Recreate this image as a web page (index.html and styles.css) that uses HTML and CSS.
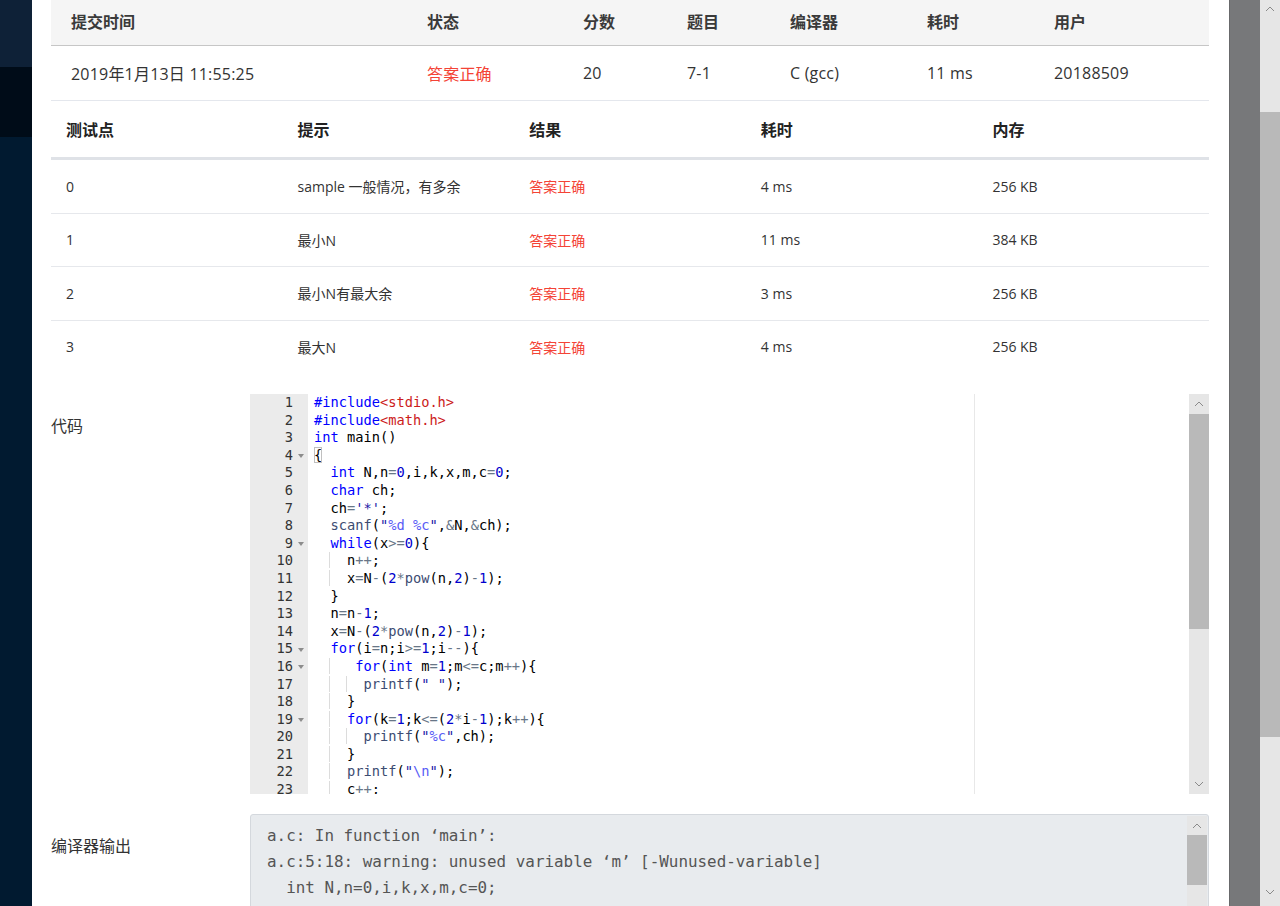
FILE: index.html
```html
<!DOCTYPE html>
<html lang="zh-CN">
<head>
<meta charset="utf-8">
<title>提交详情</title>
<link rel="stylesheet" href="styles.css">
</head>
<body>
<div class="backdrop-left"></div>
<main class="modal">
  <div class="sub-table">
    <div class="sub-head">
      <div>提交时间</div><div>状态</div><div>分数</div><div>题目</div><div>编译器</div><div>耗时</div><div>用户</div>
    </div>
    <div class="sub-row">
      <div>2019年1月13日 11:55:25</div><div class="ok">答案正确</div><div>20</div><div>7-1</div><div>C (gcc)</div><div>11 ms</div><div>20188509</div>
    </div>
  </div>

  <div class="case-table">
    <div class="case-head">
      <div>测试点</div><div>提示</div><div>结果</div><div>耗时</div><div>内存</div>
    </div>
    <div class="case-row"><div>0</div><div>sample 一般情况，有多余</div><div class="ok">答案正确</div><div>4 ms</div><div>256 KB</div></div>
    <div class="case-row"><div>1</div><div>最小N</div><div class="ok">答案正确</div><div>11 ms</div><div>384 KB</div></div>
    <div class="case-row"><div>2</div><div>最小N有最大余</div><div class="ok">答案正确</div><div>3 ms</div><div>256 KB</div></div>
    <div class="case-row last"><div>3</div><div>最大N</div><div class="ok">答案正确</div><div>4 ms</div><div>256 KB</div></div>
  </div>

  <section class="section">
    <div class="section-label">代码</div>
    <div class="code-box">
      <div class="gutter">
        <div class="gl"><span class="ln">1</span><span class="fold"></span></div>
        <div class="gl"><span class="ln">2</span><span class="fold"></span></div>
        <div class="gl"><span class="ln">3</span><span class="fold"></span></div>
        <div class="gl"><span class="ln">4</span><span class="fold open"></span></div>
        <div class="gl"><span class="ln">5</span><span class="fold"></span></div>
        <div class="gl"><span class="ln">6</span><span class="fold"></span></div>
        <div class="gl"><span class="ln">7</span><span class="fold"></span></div>
        <div class="gl"><span class="ln">8</span><span class="fold"></span></div>
        <div class="gl"><span class="ln">9</span><span class="fold open"></span></div>
        <div class="gl"><span class="ln">10</span><span class="fold"></span></div>
        <div class="gl"><span class="ln">11</span><span class="fold"></span></div>
        <div class="gl"><span class="ln">12</span><span class="fold"></span></div>
        <div class="gl"><span class="ln">13</span><span class="fold"></span></div>
        <div class="gl"><span class="ln">14</span><span class="fold"></span></div>
        <div class="gl"><span class="ln">15</span><span class="fold open"></span></div>
        <div class="gl"><span class="ln">16</span><span class="fold open"></span></div>
        <div class="gl"><span class="ln">17</span><span class="fold"></span></div>
        <div class="gl"><span class="ln">18</span><span class="fold"></span></div>
        <div class="gl"><span class="ln">19</span><span class="fold open"></span></div>
        <div class="gl"><span class="ln">20</span><span class="fold"></span></div>
        <div class="gl"><span class="ln">21</span><span class="fold"></span></div>
        <div class="gl"><span class="ln">22</span><span class="fold"></span></div>
        <div class="gl"><span class="ln">23</span><span class="fold"></span></div>
      </div>
      <div class="code">
        <div class="print-margin"></div>
<div class="cl"><span class="k">#include</span><span class="h">&lt;stdio.h&gt;</span></div>
<div class="cl"><span class="k">#include</span><span class="h">&lt;math.h&gt;</span></div>
<div class="cl"><span class="k">int</span> main()</div>
<div class="cl"><span class="br">{</span></div>
<div class="cl">  <span class="k">int</span> N,n<span class="o">=</span><span class="n">0</span>,i,k,x,m,c<span class="o">=</span><span class="n">0</span>;</div>
<div class="cl">  <span class="k">char</span> ch;</div>
<div class="cl">  ch<span class="o">=</span><span class="c">'*'</span>;</div>
<div class="cl">  <span class="f">scanf</span>(<span class="s">"<span class="e">%d</span> <span class="e">%c</span>"</span>,<span class="o">&amp;</span>N,<span class="o">&amp;</span>ch);</div>
<div class="cl">  <span class="k">while</span>(x<span class="o">&gt;=</span><span class="n">0</span>){</div>
<div class="cl"><span class="ig">  </span>  n<span class="o">++</span>;</div>
<div class="cl"><span class="ig">  </span>  x<span class="o">=</span>N<span class="o">-</span>(<span class="n">2</span><span class="o">*</span><span class="f">pow</span>(n,<span class="n">2</span>)<span class="o">-</span><span class="n">1</span>);</div>
<div class="cl">  }</div>
<div class="cl">  n<span class="o">=</span>n<span class="o">-</span><span class="n">1</span>;</div>
<div class="cl">  x<span class="o">=</span>N<span class="o">-</span>(<span class="n">2</span><span class="o">*</span><span class="f">pow</span>(n,<span class="n">2</span>)<span class="o">-</span><span class="n">1</span>);</div>
<div class="cl">  <span class="k">for</span>(i<span class="o">=</span>n;i<span class="o">&gt;=</span><span class="n">1</span>;i<span class="o">--</span>){</div>
<div class="cl"><span class="ig">  </span>   <span class="k">for</span>(<span class="k">int</span> m<span class="o">=</span><span class="n">1</span>;m<span class="o">&lt;=</span>c;m<span class="o">++</span>){</div>
<div class="cl"><span class="ig">  </span><span class="ig">  </span>  <span class="f">printf</span>(<span class="s">" "</span>);</div>
<div class="cl"><span class="ig">  </span>  }</div>
<div class="cl"><span class="ig">  </span>  <span class="k">for</span>(k<span class="o">=</span><span class="n">1</span>;k<span class="o">&lt;=</span>(<span class="n">2</span><span class="o">*</span>i<span class="o">-</span><span class="n">1</span>);k<span class="o">++</span>){</div>
<div class="cl"><span class="ig">  </span><span class="ig">  </span>  <span class="f">printf</span>(<span class="s">"<span class="e">%c</span>"</span>,ch);</div>
<div class="cl"><span class="ig">  </span>  }</div>
<div class="cl"><span class="ig">  </span>  <span class="f">printf</span>(<span class="s">"<span class="e">\n</span>"</span>);</div>
<div class="cl"><span class="ig">  </span>  c<span class="o">++</span>;</div>
      </div>
      <div class="vscroll">
        <div class="sb-btn"><svg width="10" height="6" viewBox="0 0 10 6"><polyline points="1,5 5,1 9,5" fill="none" stroke="#8a8a8a" stroke-width="1"/></svg></div>
        <div class="sb-thumb code-thumb"></div>
        <div class="sb-track"><svg width="10" height="6" viewBox="0 0 10 6"><polyline points="1,1 5,5 9,1" fill="none" stroke="#8a8a8a" stroke-width="1"/></svg></div>
      </div>
    </div>
  </section>

  <section class="section">
    <div class="section-label">编译器输出</div>
    <div class="out-box">
      <pre class="out-text">a.c: In function ‘main’:
a.c:5:18: warning: unused variable ‘m’ [-Wunused-variable]
  int N,n=0,i,k,x,m,c=0;
      ^</pre>
      <div class="vscroll out-scroll">
        <div class="sb-btn small"><svg width="10" height="6" viewBox="0 0 10 6"><polyline points="1,5 5,1 9,5" fill="none" stroke="#8a8a8a" stroke-width="1"/></svg></div>
        <div class="sb-thumb out-thumb"></div>
        <div class="sb-track"></div>
      </div>
    </div>
  </section>
</main>
<div class="backdrop-right"></div>
<div class="page-scroll">
  <div class="ps-up"><svg width="10" height="6" viewBox="0 0 10 6"><polyline points="1,5 5,1 9,5" fill="none" stroke="#8a8a8a" stroke-width="1"/></svg></div>
  <div class="ps-gap"></div>
  <div class="ps-thumb"></div>
  <div class="ps-track"></div>
  <div class="ps-down"><svg width="10" height="6" viewBox="0 0 10 6"><polyline points="1,1 5,5 9,1" fill="none" stroke="#8a8a8a" stroke-width="1"/></svg></div>
</div>
</body>
</html>
```

FILE: styles.css
```css
* { box-sizing: border-box; }

html, body {
  margin: 0;
  height: 906px;
  overflow: hidden;
}

body {
  display: flex;
  font-family: "Open Sans", "Noto Sans CJK SC", sans-serif;
  color: #333;
  background: #fff;
}

.backdrop-left {
  width: 32px;
  flex: none;
  background: linear-gradient(#0e2137 0, #0e2137 67px, #000c18 67px, #000c18 137px, #011a30 137px);
}

.modal {
  width: 1197px;
  flex: none;
  padding: 0 20px 0 19px;
  background: #fff;
  overflow: hidden;
}

.backdrop-right {
  width: 31px;
  flex: none;
  background: #77787a;
  border-left: 1px solid #68696b;
}

.page-scroll {
  width: 20px;
  flex: none;
  display: flex;
  flex-direction: column;
  background: #e6e6e6;
}
.ps-up { height: 17px; display: flex; justify-content: center; align-items: center; }
.ps-gap { height: 95px; }
.ps-thumb { height: 625px; background: #b9b9b9; }
.ps-track { flex: 1; }
.ps-down { height: 28px; display: flex; justify-content: center; align-items: center; }

/* submission table */
.sub-head, .sub-row {
  display: grid;
  grid-template-columns: 356px 156px 104px 103px 137px 127px 175px;
  align-items: center;
  font-size: 16px;
}
.sub-head > div, .sub-row > div { padding-left: 20px; white-space: nowrap; }
.sub-head {
  height: 46px;
  padding-bottom: 4px;
  background: #f5f5f5;
  border-bottom: 1px solid #c6c6c6;
  font-weight: 700;
  color: #3a3a3a;
}
.sub-row {
  height: 55px;
  border-bottom: 1px solid #e4e7ed;
  letter-spacing: 0.2px;
}

.ok { color: #f44336; }

/* test case table */
.case-head, .case-row {
  display: grid;
  grid-template-columns: repeat(5, 1fr);
  align-items: center;
}
.case-head > div, .case-row > div { padding-left: 15px; white-space: nowrap; }
.case-head {
  height: 59px;
  border-bottom: 3px solid #dfe2e7;
  font-size: 16px;
  font-weight: 700;
  color: #222;
}
.case-row {
  height: 53.5px;
  border-bottom: 1px solid #e6e8ec;
  font-size: 14px;
}
.case-row.last { border-bottom-color: transparent; }

/* sections */
.section {
  display: flex;
  margin-top: 20px;
}
.section-label {
  width: 199px;
  flex: none;
  padding-top: 20px;
  font-size: 16px;
  line-height: 24px;
  color: #333;
}

/* code editor */
.code-box {
  flex: 1;
  height: 400px;
  display: flex;
  overflow: hidden;
  font-family: "DejaVu Sans Mono", "Liberation Mono", monospace;
  font-size: 13.7px;
  line-height: 17.6px;
}
.gutter {
  width: 58px;
  flex: none;
  background: #ebebeb;
  color: #333;
}
.gl { display: flex; height: 17.6px; }
.ln { width: 43px; text-align: right; }
.fold { width: 15px; display: flex; align-items: center; justify-content: center; }
.fold.open::before {
  content: "";
  border-top: 4px solid #8c8c8c;
  border-left: 3px solid transparent;
  border-right: 3px solid transparent;
  margin-top: 1px;
}
.code {
  flex: 1;
  position: relative;
  padding-left: 6px;
  color: #000;
  overflow: hidden;
}
.print-margin {
  position: absolute;
  left: 666px;
  top: 0;
  bottom: 0;
  width: 1px;
  background: #e8e8e8;
}
.cl { height: 17.6px; white-space: pre; }
.k { color: #0000ff; }
.h { color: #cc1b1b; }
.n { color: #0000cd; }
.o { color: #687687; }
.f { color: #3c4c72; }
.s { color: #1a1aa6; }
.e { color: #585cf6; }
.c { color: #1a1aa6; }
.br { outline: 1px solid #c0c0c0; outline-offset: -1px; }
.ig { box-shadow: inset -1px 0 0 #dcdcdc; }

.vscroll {
  width: 20px;
  flex: none;
  display: flex;
  flex-direction: column;
  background: #e6e6e6;
}
.sb-btn { height: 20px; display: flex; align-items: center; justify-content: center; }
.sb-btn.small { height: 19px; }
.sb-thumb { background: #b9b9b9; }
.code-thumb { height: 215px; }
.sb-track { flex: 1; display: flex; align-items: flex-end; justify-content: center; padding-bottom: 7px; }

/* compiler output */
.out-box {
  flex: 1;
  height: 130px;
  display: flex;
  background: #e8ebee;
  border: 1px solid #d4d8dd;
  border-radius: 3px;
}
.out-text {
  flex: 1;
  margin: 0;
  padding: 8px 16px 7px;
  font-family: "DejaVu Sans Mono", "Liberation Mono", monospace;
  font-size: 15.9px;
  line-height: 26px;
  color: #555;
  overflow: hidden;
}
.out-scroll { margin: 1px 1px 0 0; }
.out-thumb { height: 50px; }
```
